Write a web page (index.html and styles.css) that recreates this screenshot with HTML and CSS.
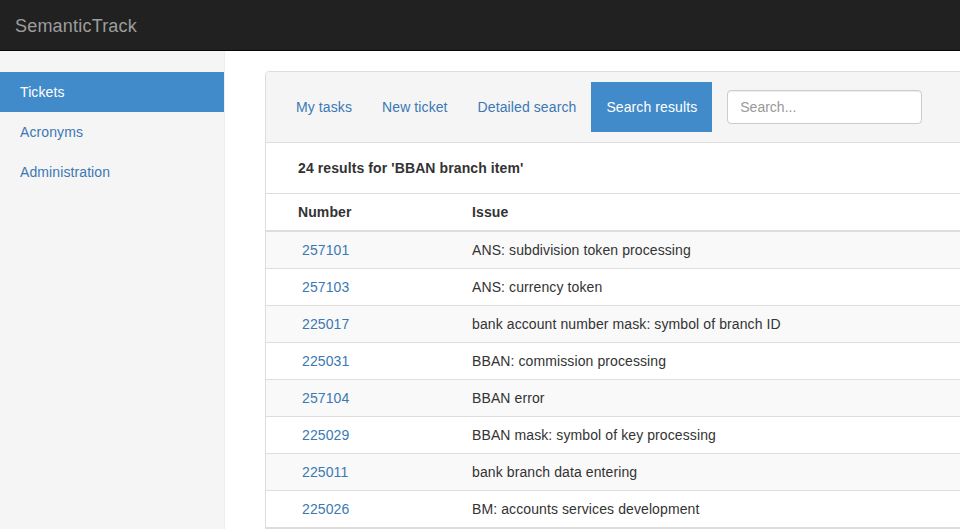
FILE: index.html
```html
<!DOCTYPE html>
<html>
<head>
<meta charset="utf-8">
<title>SemanticTrack</title>
<link rel="stylesheet" href="styles.css">
</head>
<body>
<header class="navbar">
  <span class="brand">SemanticTrack</span>
</header>
<div class="layout">
  <aside class="sidebar">
    <ul class="side-nav">
      <li class="active"><a href="#">Tickets</a></li>
      <li><a href="#">Acronyms</a></li>
      <li><a href="#">Administration</a></li>
    </ul>
  </aside>
  <main class="main">
    <section class="panel">
      <div class="panel-heading">
        <ul class="pills">
          <li><a href="#">My tasks</a></li>
          <li><a href="#">New ticket</a></li>
          <li><a href="#">Detailed search</a></li>
          <li class="active"><a href="#">Search results</a></li>
        </ul>
        <input class="search" type="text" placeholder="Search...">
      </div>
      <div class="results-title">24 results for 'BBAN branch item'</div>
      <table class="results">
        <thead>
          <tr><th class="c-num">Number</th><th class="c-issue">Issue</th></tr>
        </thead>
        <tbody>
          <tr><td class="c-num"><a href="#">257101</a></td><td>ANS: subdivision token processing</td></tr>
          <tr><td class="c-num"><a href="#">257103</a></td><td>ANS: currency token</td></tr>
          <tr><td class="c-num"><a href="#">225017</a></td><td>bank account number mask: symbol of branch ID</td></tr>
          <tr><td class="c-num"><a href="#">225031</a></td><td>BBAN: commission processing</td></tr>
          <tr><td class="c-num"><a href="#">257104</a></td><td>BBAN error</td></tr>
          <tr><td class="c-num"><a href="#">225029</a></td><td>BBAN mask: symbol of key processing</td></tr>
          <tr><td class="c-num"><a href="#">225011</a></td><td>bank branch data entering</td></tr>
          <tr><td class="c-num"><a href="#">225026</a></td><td>BM: accounts services development</td></tr>
        </tbody>
      </table>
    </section>
  </main>
</div>
</body>
</html>
```
FILE: styles.css
```css
html, body {
  margin: 0;
  padding: 0;
  overflow: hidden;
  height: 100%;
}
body {
  font-family: "Liberation Sans", Arial, sans-serif;
  font-size: 14px;
  line-height: 20px;
  letter-spacing: 0.1px;
  color: #333;
  background: #fff;
  display: flex;
  flex-direction: column;
}
a {
  color: #3b78b4;
  text-decoration: none;
}
ul {
  list-style: none;
  margin: 0;
  padding: 0;
}
.navbar {
  height: 50px;
  flex: none;
  background: #212121;
  border-bottom: 1px solid #080808;
  display: flex;
  align-items: center;
  padding: 0 15px;
}
.brand {
  font-size: 18px;
  color: #9d9d9d;
  line-height: 20px;
  letter-spacing: 0.2px;
  padding-top: 2px;
}
.layout {
  flex: 1;
  display: flex;
  min-height: 0;
}
.sidebar {
  width: 224px;
  flex: none;
  background: #f5f5f5;
  border-right: 1px solid #eee;
  padding-top: 21px;
}
.side-nav a {
  display: block;
  padding: 10px 20px;
}
.side-nav .active a {
  background: #428bca;
  color: #fff;
}
.main {
  flex: none;
  width: 760px;
  padding: 20px 0 0 40px;
}
.panel {
  border: 1px solid #ddd;
  border-radius: 4px 4px 0 0;
  background: #fff;
}
.panel-heading {
  background: #f5f5f5;
  border-bottom: 1px solid #ddd;
  border-radius: 3px 3px 0 0;
  padding: 10px 15px;
  display: flex;
  align-items: center;
}
.pills {
  display: flex;
}
.pills a {
  display: block;
  padding: 15px 15px;
}
.pills .active a {
  background: #428bca;
  color: #fff;
}
.search {
  margin-left: 15px;
  width: 195px;
  height: 34px;
  box-sizing: border-box;
  border: 1px solid #ccc;
  border-radius: 4px;
  padding: 6px 12px;
  font-family: inherit;
  font-size: 14px;
  color: #555;
  background: #fff;
  box-shadow: inset 0 1px 1px rgba(0,0,0,.075);
}
.search::placeholder {
  color: #999;
}
.results-title {
  padding: 15px 32px;
  font-weight: bold;
  font-size: 14px;
  border-bottom: 1px solid #ddd;
}
.results {
  width: 100%;
  border-collapse: collapse;
  table-layout: fixed;
}
.results th {
  text-align: left;
  font-weight: bold;
  padding: 8px 0;
  border-bottom: 2px solid #ddd;
}
.results td {
  padding: 8px 0;
  border-bottom: 1px solid #ddd;
}
.results .c-num {
  width: 206px;
  box-sizing: border-box;
}
.results th.c-num {
  padding-left: 32px;
}
.results td.c-num {
  padding-left: 36px;
}
.results tbody tr:nth-child(odd) {
  background: #f9f9f9;
}
```
